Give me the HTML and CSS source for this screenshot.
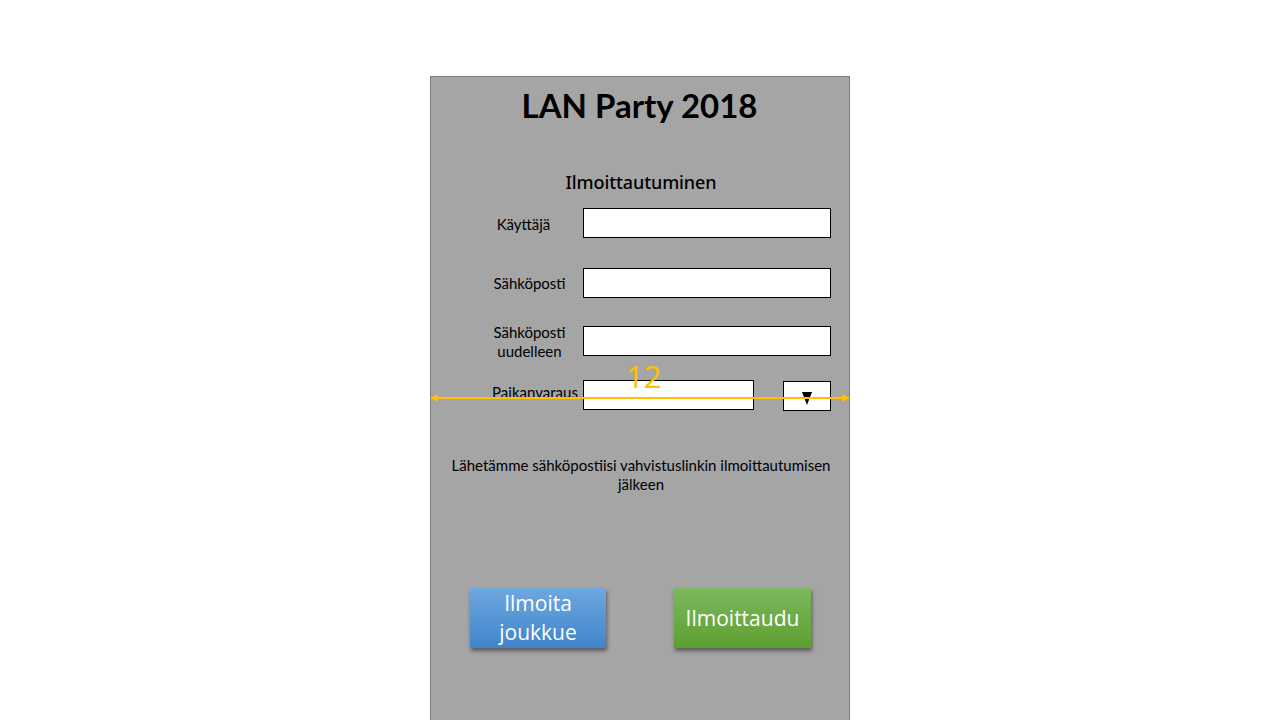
FILE: index.html
```html
<!DOCTYPE html>
<html lang="fi">
<head>
<meta charset="utf-8">
<title>LAN Party 2018</title>
<link rel="stylesheet" href="styles.css">
</head>
<body>
<main class="panel">
  <h1 class="title">LAN Party 2018</h1>
  <h2 class="subtitle">Ilmoittautuminen</h2>
  <form class="form">
    <div class="row row-user">
      <label class="label">Käyttäjä</label>
      <div class="input"></div>
    </div>
    <div class="row row-email">
      <label class="label">Sähköposti</label>
      <div class="input"></div>
    </div>
    <div class="row row-email2">
      <label class="label">Sähköposti<br>uudelleen</label>
      <div class="input"></div>
    </div>
    <div class="row row-seat">
      <label class="label">Paikanvaraus</label>
      <div class="input input-short"></div>
      <div class="dropdown"><span class="arrow"></span></div>
    </div>
  </form>
  <p class="note">Lähetämme sähköpostiisi vahvistuslinkin ilmoittautumisen jälkeen</p>
  <div class="buttons">
    <button class="btn btn-blue" type="button">Ilmoita<br>joukkue</button>
    <button class="btn btn-green" type="button">Ilmoittaudu</button>
  </div>
  <div class="annotation">
    <span class="anno-num">12</span>
    <svg class="anno-line" width="420" height="12" viewBox="0 0 420 12">
      <line x1="4" y1="6" x2="416" y2="6" stroke="#ffc000" stroke-width="2"/>
      <polygon points="0,6 8,2 8,10" fill="#ffc000"/>
      <polygon points="420,6 412,2 412,10" fill="#ffc000"/>
    </svg>
  </div>
</main>
</body>
</html>
```
FILE: styles.css
```css
html, body {
  margin: 0;
  padding: 0;
  background: #ffffff;
}
body {
  font-family: Lato, "Liberation Sans", sans-serif;
  color: #000;
}
.panel {
  position: relative;
  box-sizing: border-box;
  margin: 76px 0 0 430px;
  width: 420px;
  height: 644px;
  background: #a5a5a5;
  border: 1px solid #7f7f7f;
  border-bottom: none;
  display: flex;
  flex-direction: column;
}
.title {
  margin: 8px 0 0;
  text-align: center;
  font-size: 33px;
  line-height: 40px;
  font-weight: 700;
  padding-right: 1px;
}
.subtitle {
  margin: 45px 0 0;
  text-align: center;
  font-family: "Noto Sans", sans-serif;
  font-weight: 500;
  font-size: 18px;
  line-height: 24px;
  padding-left: 2px;
  letter-spacing: -0.1px;
}
.form {
  margin: 14px 0 0;
  display: flex;
  flex-direction: column;
}
.row {
  display: flex;
  align-items: center;
  height: 30px;
}
.row-email { margin-top: 30px; }
.row-email2 { margin-top: 28px; }
.row-seat { margin-top: 24px; }
.label {
  width: 152px;
  box-sizing: border-box;
  text-align: center;
  font-size: 15px;
  line-height: 19px;
}
.row-user .label { padding-left: 33px; padding-top: 2px; }
.row-email .label { padding-left: 45px; padding-top: 0; }
.row-email2 .label { padding-left: 45px; padding-top: 2px; }
.row-seat .label { padding-left: 56px; padding-top: 0; margin-top: -6px; }
.input {
  box-sizing: border-box;
  width: 248px;
  height: 30px;
  background: #fff;
  border: 1px solid #000;
}
.input-short {
  width: 171px;
}
.dropdown {
  box-sizing: border-box;
  margin-left: 29px;
  margin-top: 2px;
  width: 48px;
  height: 30px;
  background: #fff;
  border: 1px solid #000;
  display: flex;
  align-items: center;
  justify-content: center;
}
.arrow {
  width: 0;
  height: 0;
  border-left: 5px solid transparent;
  border-right: 5px solid transparent;
  border-top: 13px solid #000;
  margin-top: 4px;
  margin-left: 0;
}
.note {
  margin: 46px 0 0;
  padding: 0 16px 0 18px;
  text-align: center;
  font-size: 15px;
  line-height: 19px;
}
.buttons {
  margin-top: 94px;
  display: flex;
  padding-left: 39px;
  gap: 68px;
}
.btn {
  box-sizing: border-box;
  width: 136px;
  height: 60px;
  border: none;
  padding: 0;
  color: #fff;
  font-family: "Open Sans", sans-serif;
  font-size: 21px;
  line-height: 29px;
  box-shadow: 1px 3px 4px rgba(0, 0, 0, 0.45);
  cursor: pointer;
}
.btn-blue {
  background: linear-gradient(#6fa7df, #3f85cc);
}
.btn-green {
  background: linear-gradient(#7cb85e, #5e9f30);
  width: 137px;
}
.annotation {
  position: absolute;
  left: -1px;
  top: 282px;
  width: 420px;
  height: 50px;
  pointer-events: none;
}
.anno-num {
  position: absolute;
  left: 196px;
  top: 0;
  color: #ffc000;
  font-family: "Open Sans", sans-serif;
  font-size: 31px;
  line-height: 34px;
}
.anno-line {
  position: absolute;
  left: 0;
  top: 33px;
}
```
